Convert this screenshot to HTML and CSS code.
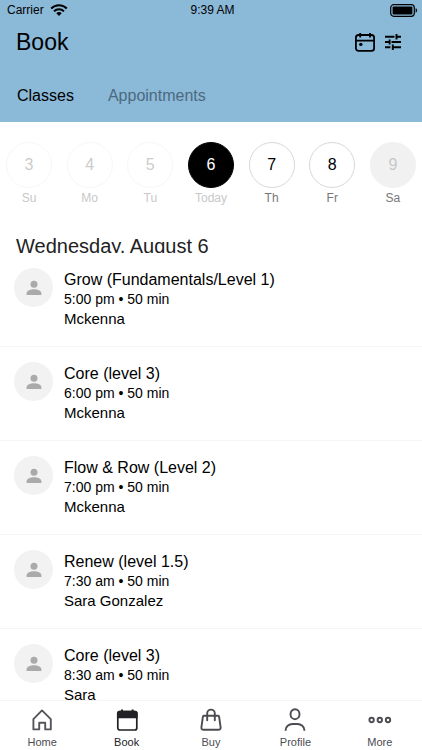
FILE: index.html
```html
<!DOCTYPE html>
<html lang="en">
<head>
    <meta charset="UTF-8">
    <meta name="viewport" content="width=device-width, initial-scale=1.0">
    <title>Book</title>
    <link rel="stylesheet" href="styles.css">
</head>
<body>
    <svg class="sprite" width="0" height="0" aria-hidden="true">
        <symbol id="person" viewBox="0 0 16 16">
            <circle cx="8" cy="4.3" r="3.5" />
            <path d="M.6 15v-1.8c0-2.5 4.2-3.9 7.4-3.9s7.4 1.4 7.4 3.9V15z" />
        </symbol>
    </svg>
    <div class="app">
        <header class="header">
            <div class="status">
                <div class="carrier">
                    <span>Carrier</span>
                    <svg width="18" height="12" viewBox="0 0 18 12" fill="none" stroke="#000" stroke-width="2">
                        <path d="M1.2 4.5a11 11 0 0 1 15.6 0M4 7.4a7 7 0 0 1 10 0" />
                        <path d="M9 12 6.3 9.3a3.9 3.9 0 0 1 5.4 0z" fill="#000" stroke="none" />
                    </svg>
                </div>
                <span class="clock">9:39 AM</span>
                <div class="battery">
                    <svg width="28" height="13" viewBox="0 0 28 13">
                        <rect x=".7" y=".7" width="23.6" height="11.6" rx="3" fill="none" stroke="#000" stroke-width="1.2" />
                        <rect x="2.6" y="2.6" width="19.8" height="7.8" rx="1" />
                        <path d="M25.6 4.3c2 .6 2 3.8 0 4.4z" />
                    </svg>
                </div>
            </div>
            <div class="title-bar">
                <h1>Book</h1>
                <div class="actions">
                    <button type="button" aria-label="Calendar">
                        <svg width="20" height="20" viewBox="0 0 20 20" fill="none" stroke="#000" stroke-width="1.8">
                            <rect x=".9" y="3" width="18.2" height="15.8" rx="2.6" />
                            <path d="M1 8.6h18M5.2 1v4.4M15 1v4.4" />
                            <circle cx="5.8" cy="12.4" r="1.7" fill="#000" stroke="none" />
                        </svg>
                    </button>
                    <button type="button" aria-label="Filters">
                        <svg width="18" height="18" viewBox="0 0 18 18" fill="none" stroke="#000" stroke-width="1.9">
                            <path d="M1 3.7h9.5M12.5 3.7H17M12.5 1v5.4M1 9h3.6M7.5 9H17M5.6 6.4v5.2M1 14.3h5.4M8.8 14.3H17M8.8 11.6V17" />
                        </svg>
                    </button>
                </div>
            </div>
            <nav class="tabs">
                <button type="button" class="tab active">Classes</button>
                <button type="button" class="tab">Appointments</button>
            </nav>
        </header>

        <div class="days">
            <button type="button" class="day past" disabled><span class="num">3</span><span class="name">Su</span></button>
            <button type="button" class="day past" disabled><span class="num">4</span><span class="name">Mo</span></button>
            <button type="button" class="day past" disabled><span class="num">5</span><span class="name">Tu</span></button>
            <button type="button" class="day today"><span class="num">6</span><span class="name">Today</span></button>
            <button type="button" class="day"><span class="num">7</span><span class="name">Th</span></button>
            <button type="button" class="day"><span class="num">8</span><span class="name">Fr</span></button>
            <button type="button" class="day closed"><span class="num">9</span><span class="name">Sa</span></button>
        </div>

        <h2 class="date">Wednesday, August 6</h2>

        <ul class="classes">
            <li class="class">
                <div class="avatar"><svg width="16" height="16"><use href="#person" /></svg></div>
                <div class="info">
                    <h3>Grow (Fundamentals/Level 1)</h3>
                    <p class="time">5:00 pm • 50 min</p>
                    <p class="teacher">Mckenna</p>
                </div>
            </li>
            <li class="class">
                <div class="avatar"><svg width="16" height="16"><use href="#person" /></svg></div>
                <div class="info">
                    <h3>Core (level 3)</h3>
                    <p class="time">6:00 pm • 50 min</p>
                    <p class="teacher">Mckenna</p>
                </div>
            </li>
            <li class="class">
                <div class="avatar"><svg width="16" height="16"><use href="#person" /></svg></div>
                <div class="info">
                    <h3>Flow &amp; Row (Level 2)</h3>
                    <p class="time">7:00 pm • 50 min</p>
                    <p class="teacher">Mckenna</p>
                </div>
            </li>
            <li class="class">
                <div class="avatar"><svg width="16" height="16"><use href="#person" /></svg></div>
                <div class="info">
                    <h3>Renew (level 1.5)</h3>
                    <p class="time">7:30 am • 50 min</p>
                    <p class="teacher">Sara Gonzalez</p>
                </div>
            </li>
            <li class="class">
                <div class="avatar"><svg width="16" height="16"><use href="#person" /></svg></div>
                <div class="info">
                    <h3>Core (level 3)</h3>
                    <p class="time">8:30 am • 50 min</p>
                    <p class="teacher">Sara</p>
                </div>
            </li>
        </ul>

        <nav class="bottom-nav">
            <a href="#">
                <svg width="24" height="24" viewBox="0 0 24 24" fill="none" stroke="#55555b" stroke-width="1.9" stroke-linejoin="round">
                    <path d="M3.4 11.2 12 2.4l8.8 8.8v10.2h-5.6v-6.6H9.2v6.6H3.4z" />
                </svg>
                Home
            </a>
            <a href="#" class="active">
                <svg width="24" height="24" viewBox="0 0 24 24" fill="none" stroke="#212126" stroke-width="1.7">
                    <rect x="2.8" y="3.6" width="19" height="18.4" rx="2" />
                    <path d="M2.8 9.4V5.6q0-2 2-2h15q2 0 2 2v3.8z" fill="#212126" />
                    <path d="M7 1.4v3M17.6 1.4v3" stroke-width="2" />
                </svg>
                Book
            </a>
            <a href="#">
                <svg width="24" height="24" viewBox="0 0 24 24" fill="none" stroke="#4b4b52" stroke-width="1.9" stroke-linecap="round" stroke-linejoin="round">
                    <path d="M4.8 7.8h14.4q.8 0 .9.9l1.5 10.6q.2 2.5-2.2 2.5H4.6q-2.4 0-2.2-2.5L3.9 8.7q.1-.9.9-.9z" />
                    <path d="M8.2 12.2V5.4a3.8 3.8 0 0 1 7.6 0v6.8" />
                </svg>
                Buy
            </a>
            <a href="#">
                <svg width="24" height="24" viewBox="0 0 24 24" fill="none" stroke="#4b4b52" stroke-width="1.9">
                    <ellipse cx="12" cy="6.2" rx="4.5" ry="5" />
                    <path d="M2.6 22.8v-.6c0-3.6 3.2-6.2 7-6.2h4.8c3.8 0 7 2.6 7 6.2v.6" />
                </svg>
                Profile
            </a>
            <a href="#">
                <svg width="24" height="24" viewBox="0 0 24 24" fill="none" stroke="#4b4b52" stroke-width="1.9">
                    <circle cx="3.6" cy="12" r="2.2" />
                    <circle cx="11.8" cy="12" r="2.2" />
                    <circle cx="20" cy="12" r="2.2" />
                </svg>
                More
            </a>
        </nav>
    </div>
</body>
</html>
```
FILE: styles.css
```css
* {
    box-sizing: border-box;
}

body {
    margin: 0;
    background-color: #fff;
    font-family: "Liberation Sans", Arial, sans-serif;
    color: #000;
}

h1, h2, h3, p, ul {
    margin: 0;
    padding: 0;
    font-weight: normal;
}

button {
    padding: 0;
    border: none;
    background: none;
    font-family: inherit;
    color: inherit;
}

svg {
    display: block;
}

.sprite {
    position: absolute;
}

.app {
    display: flex;
    flex-direction: column;
    height: 100vh;
    overflow: hidden;
}

.header {
    flex: none;
    padding-bottom: 10px;
    background-color: #8bb9d8;
}

.status {
    display: flex;
    align-items: center;
    height: 20px;
    padding: 0 4px;
    font-size: 12px;
}

.carrier, .battery {
    display: flex;
    flex: 1;
    align-items: center;
    gap: 6px;
}

.carrier {
    padding-left: 3px;
}

.battery {
    justify-content: flex-end;
}

.title-bar {
    display: flex;
    justify-content: space-between;
    align-items: center;
    height: 44px;
    padding: 0 20px 0 16px;
}

.title-bar h1 {
    font-size: 23px;
}

.actions {
    display: flex;
    align-items: center;
    gap: 9px;
}

.tabs {
    display: flex;
    gap: 34px;
    height: 48px;
    padding: 16px 17px 0;
}

.tab {
    height: 32px;
    font-size: 16px;
    color: #4b6a80;
}

.tab.active {
    color: #000;
}

.days {
    display: flex;
    flex: none;
    justify-content: space-between;
    padding: 20px 6px 28px;
}

.day {
    display: flex;
    flex-direction: column;
    align-items: center;
    gap: 2px;
    width: 46px;
    font-size: 12px;
    line-height: 16px;
    color: #777;
}

.num {
    width: 46px;
    height: 46px;
    border: 1px solid #d8d8d8;
    border-radius: 50%;
    font-size: 16px;
    line-height: 44px;
    color: #000;
}

.past .num {
    border-color: #f7f7f7;
    color: #ccc;
}

.past .name, .today .name {
    color: #c8c8c8;
}

.today .num {
    border-color: #000;
    background-color: #000;
    color: #fff;
}

.closed .num {
    border-color: #f1f1f1;
    background-color: #f1f1f1;
    color: #c8c8c8;
}

.date {
    flex: none;
    height: 19px;
    padding: 0 16px;
    overflow: hidden;
    font-size: 20px;
    line-height: 24px;
    color: #222;
}

.classes {
    flex: 1;
    min-height: 0;
    overflow: hidden;
    list-style: none;
}

.class {
    display: flex;
    gap: 11px;
    height: 94px;
    padding: 15px 14px 0;
    border-bottom: 1px solid #f5f5f5;
}

.avatar {
    display: flex;
    justify-content: center;
    align-items: center;
    width: 39px;
    height: 39px;
    border-radius: 50%;
    background-color: #f2f2f2;
    fill: #aaa;
}

.info {
    padding-top: 2px;
    line-height: 19px;
}

.info h3 {
    font-size: 16px;
    line-height: 20px;
}

.time {
    font-size: 14px;
}

.teacher {
    font-size: 15px;
}

.bottom-nav {
    display: flex;
    flex: none;
    height: 50px;
    border-top: 1px solid #f5f5f5;
    background-color: #fff;
}

.bottom-nav a {
    display: flex;
    flex: 1;
    flex-direction: column;
    align-items: center;
    gap: 3px;
    padding-top: 7px;
    font-size: 11px;
    line-height: 14px;
    text-decoration: none;
    color: #4b4b52;
}

.bottom-nav a.active {
    color: #212126;
}
```
